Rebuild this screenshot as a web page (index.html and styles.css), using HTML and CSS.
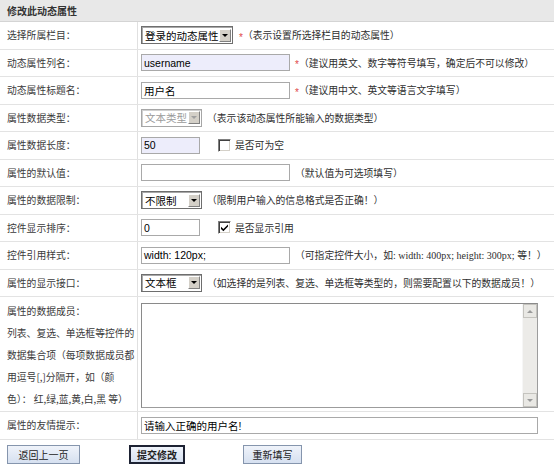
FILE: index.html
```html
<!DOCTYPE html>
<html>
<head>
<meta charset="utf-8">
<link rel="stylesheet" href="styles.css">
</head>
<body>
<div class="panel">
  <div class="head">修改此动态属性</div>

  <div class="row">
    <div class="lbl">选择所属栏目：</div>
    <div class="val">
      <span class="sel w92"><span class="t">登录的动态属性</span><span class="arr"><i class="tri"></i></span></span>
      <span class="req r1">*</span><span class="hint">（表示设置所选择栏目的动态属性）</span>
    </div>
  </div>

  <div class="row">
    <div class="lbl">动态属性列名：</div>
    <div class="val">
      <span class="inp w149 lav">username</span>
      <span class="req">*</span><span class="hint">（建议用英文、数字等符号填写，确定后不可以修改）</span>
    </div>
  </div>

  <div class="row">
    <div class="lbl">动态属性标题名：</div>
    <div class="val">
      <span class="inp w149">用户名</span>
      <span class="req">*</span><span class="hint">（建议用中文、英文等语言文字填写）</span>
    </div>
  </div>

  <div class="row">
    <div class="lbl">属性数据类型：</div>
    <div class="val">
      <span class="sel w61 dis"><span class="t">文本类型</span><span class="arr"><i class="tri"></i></span></span>
      <span class="hint gap">（表示该动态属性所能输入的数据类型）</span>
    </div>
  </div>

  <div class="row">
    <div class="lbl">属性数据长度：</div>
    <div class="val">
      <span class="inp w59 lav">50</span>
      <span class="cb"></span><span class="hint">是否可为空</span>
    </div>
  </div>

  <div class="row">
    <div class="lbl">属性的默认值：</div>
    <div class="val">
      <span class="inp w149"></span>
      <span class="hint gap">（默认值为可选项填写）</span>
    </div>
  </div>

  <div class="row">
    <div class="lbl">属性的数据限制：</div>
    <div class="val">
      <span class="sel w61"><span class="t">不限制</span><span class="arr"><i class="tri"></i></span></span>
      <span class="hint gap">（限制用户输入的信息格式是否正确！）</span>
    </div>
  </div>

  <div class="row">
    <div class="lbl">控件显示排序：</div>
    <div class="val">
      <span class="inp w59">0</span>
      <span class="cb"><svg width="9" height="9" viewBox="0 0 9 9"><path d="M1 3.8 L3.4 6.1 L8 1.5 L8 3.6 L3.4 8.2 L1 5.9 Z" fill="#000"/></svg></span><span class="hint">是否显示引用</span>
    </div>
  </div>

  <div class="row">
    <div class="lbl">控件引用样式：</div>
    <div class="val">
      <span class="inp w149">width: 120px;</span>
      <span class="hint gap">（可指定控件大小，如<span class="ser">: width: 400px; height: 300px; </span>等！）</span>
    </div>
  </div>

  <div class="row">
    <div class="lbl">属性的显示接口：</div>
    <div class="val">
      <span class="sel w61"><span class="t">文本框</span><span class="arr"><i class="tri"></i></span></span>
      <span class="hint gap">（如选择的是列表、复选、单选框等类型的，则需要配置以下的数据成员！）</span>
    </div>
  </div>

  <div class="row tall">
    <div class="lbl multi">属性的数据成员：<br>列表、复选、单选框等控件的<br>数据集合项（每项数据成员都<br>用逗号[,]分隔开，如（颜<br>色）： 红,绿,蓝,黄,白,黑 等）</div>
    <div class="val top">
      <div class="ta">
        <div class="area"></div>
        <div class="sb">
          <span class="sbtn"><i class="tri up"></i></span>
          <span class="sbtn"><i class="tri gray"></i></span>
        </div>
      </div>
    </div>
  </div>

  <div class="row">
    <div class="lbl">属性的友情提示：</div>
    <div class="val">
      <span class="inp w397">请输入正确的用户名!</span>
    </div>
  </div>

  <div class="btnrow">
    <span class="btn b1">返回上一页</span>
    <span class="btn b2">提交修改</span>
    <span class="btn b3">重新填写</span>
  </div>
</div>
</body>
</html>
```

FILE: styles.css
```css
html, body {
  margin: 0;
  padding: 0;
  background: #fff;
}
body {
  font-family: "Noto Sans CJK SC", sans-serif;
  font-size: 9.8px;
  color: #2e2e2e;
  width: 554px;
  height: 469px;
  overflow: hidden;
}
.head {
  height: 22px;
  box-sizing: border-box;
  line-height: 21px;
  background: #e8e8e8;
  border-bottom: 1px solid #d4d4d4;
  padding-left: 7px;
  font-weight: bold;
  font-size: 10px;
  color: #333;
}
.row {
  display: grid;
  grid-template-columns: 138px 1fr;
  height: 27.5px;
  box-sizing: border-box;
  border-bottom: 1px solid #e3e3e3;
}
.row.tall {
  height: 115px;
}
.lbl {
  border-right: 1px solid #e0e0e0;
  padding-left: 7px;
  display: flex;
  align-items: center;
  white-space: nowrap;
  color: #3a3a3a;
}
.lbl.multi {
  display: block;
  line-height: 22px;
  padding-top: 3px;
}
.val {
  display: flex;
  align-items: center;
  padding-left: 3px;
  white-space: nowrap;
}
.val.top {
  align-items: flex-start;
  padding-top: 6px;
}
.sel {
  display: inline-flex;
  align-items: center;
  height: 18px;
  box-sizing: border-box;
  border: 1px solid #6e6e6e;
  box-shadow: inset 1px 1px 0 #a8a8a8;
  background: #fff;
  padding-left: 3px;
  font-size: 10.5px;
  color: #000;
}
.sel .t {
  flex: 1;
}
.sel .arr {
  width: 12px;
  height: 13px;
  box-sizing: border-box;
  background: #d4d0c8;
  border: 1px solid;
  border-color: #fff #808080 #808080 #fff;
  display: flex;
  align-items: center;
  justify-content: center;
  margin-right: 1px;
}
.tri {
  display: block;
  width: 0;
  height: 0;
  border-left: 3px solid transparent;
  border-right: 3px solid transparent;
  border-top: 3px solid #000;
}
.tri.up {
  border-top: 0;
  border-bottom: 3px solid #9a9a9a;
}
.tri.gray {
  border-top-color: #9a9a9a;
}
.sel.dis {
  border-color: #a6a6a6;
  box-shadow: inset 1px 1px 0 #d0d0d0;
  color: #9a9a9a;
}
.sel.dis .tri {
  border-top-color: #a0a0a0;
}
.w92 { width: 92px; }
.w61 { width: 61px; }
.w149 { width: 149px; }
.w59 { width: 59px; }
.w397 { width: 397px; }
.inp {
  display: inline-flex;
  align-items: center;
  height: 17px;
  box-sizing: border-box;
  border: 1px solid #a9a9a9;
  padding: 0 2px;
  background: #fff;
  color: #000;
  font-family: "Liberation Sans", "Noto Sans CJK SC", sans-serif;
  font-size: 10.5px;
}
.inp.lav {
  background: #ededfb;
}
.req {
  color: #e04848;
  font-family: "Liberation Sans", sans-serif;
  font-size: 10px;
  margin-left: 5px;
  padding-top: 4px;
}
.req.r1 {
  margin-left: 6px;
}
.hint {
  color: #2e2e2e;
}
.hint.gap {
  margin-left: 5px;
}
.ser {
  font-family: "Liberation Serif", serif;
  font-size: 10px;
}
.cb {
  width: 13px;
  height: 13px;
  box-sizing: border-box;
  border: 1px solid;
  border-color: #808080 #fff #fff #808080;
  box-shadow: inset 1px 1px 0 #404040, inset -1px -1px 0 #d4d0c8;
  background: #fff;
  margin-left: 18px;
  margin-right: 4px;
  display: flex;
  align-items: center;
  justify-content: center;
}
.ta {
  width: 397px;
  height: 105px;
  box-sizing: border-box;
  border: 1px solid #9c9c9c;
  border-top-color: #8a8a8a;
  border-left-color: #8a8a8a;
  display: flex;
  background: #fff;
}
.ta .area {
  flex: 1;
}
.sb {
  width: 14px;
  background: #ecebe8;
  border-left: 1px solid #f6f6f6;
  display: flex;
  flex-direction: column;
  justify-content: space-between;
}
.sbtn {
  height: 14px;
  box-sizing: border-box;
  border: 1px solid #c4c3be;
  background: #e9e8e4;
  display: flex;
  align-items: center;
  justify-content: center;
}
.btnrow {
  display: flex;
  align-items: center;
  height: 29.5px;
  padding-left: 7px;
}
.btn {
  display: inline-flex;
  align-items: center;
  justify-content: center;
  height: 19px;
  box-sizing: border-box;
  border: 1px solid #8595ad;
  background: linear-gradient(#eff3fa, #d6e0f0);
  font-size: 10px;
  color: #222;
}
.b1 { width: 73px; }
.b2 {
  width: 56px;
  margin-left: 49px;
  border: 2px solid #1d2233;
  font-weight: bold;
}
.b3 {
  width: 59px;
  margin-left: 58px;
}
```
